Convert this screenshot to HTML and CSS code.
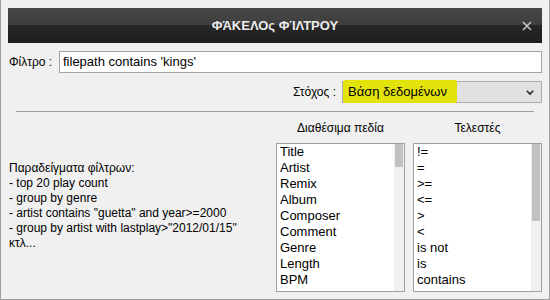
FILE: index.html
```html
<!DOCTYPE html>
<html lang="el">
<head>
    <meta charset="UTF-8">
    <meta name="viewport" content="width=device-width, initial-scale=1.0">
    <title>Φάκελος φίλτρου</title>
    <link rel="stylesheet" href="styles.css">
</head>
<body>
    <div class="window">
        <div class="titlebar">
            <span></span>
            <span class="title">ΦΆΚΕΛΟς ΦΊΛΤΡΟΥ</span>
            <svg class="close" width="10" height="10" viewBox="0 0 10 10">
                <path d="M1 1 L9 9 M9 1 L1 9" stroke="#c4c4c4" stroke-width="1.6" fill="none"/>
            </svg>
        </div>

        <!-- Filter expression -->
        <div class="filter-row">
            <span class="field-label">Φίλτρο :</span>
            <div class="text-input">filepath contains 'kings'</div>
        </div>

        <div class="target-row">
            <span class="field-label">Στόχος :</span>
            <div class="select">
                <span class="select-value">Βάση δεδομένων</span>
                <svg class="chevron" width="8" height="5" viewBox="0 0 8 5">
                    <path d="M0.8 0.8 L4 4 L7.2 0.8" stroke="#222" stroke-width="1.6" fill="none"/>
                </svg>
            </div>
        </div>

        <div class="divider"></div>

        <div class="lower">
            <div class="examples">
                Παραδείγματα φίλτρων:<br>
                - top 20 play count<br>
                - group by genre<br>
                - artist contains "guetta" and year&gt;=2000<br>
                - group by artist with lastplay&gt;"2012/01/15"<br>
                κτλ...
            </div>

            <div class="column">
                <div class="col-title">Διαθέσιμα πεδία</div>
                <div class="listbox">
                    <div class="items">
                        <div>Title</div>
                        <div>Artist</div>
                        <div>Remix</div>
                        <div>Album</div>
                        <div>Composer</div>
                        <div>Comment</div>
                        <div>Genre</div>
                        <div>Length</div>
                        <div>BPM</div>
                        <div>Year</div>
                    </div>
                    <div class="scrollbar"><div class="thumb thumb-short"></div></div>
                </div>
            </div>

            <div class="column">
                <div class="col-title">Τελεστές</div>
                <div class="listbox">
                    <div class="items">
                        <div>!=</div>
                        <div>=</div>
                        <div>&gt;=</div>
                        <div>&lt;=</div>
                        <div>&gt;</div>
                        <div>&lt;</div>
                        <div>is not</div>
                        <div>is</div>
                        <div>contains</div>
                        <div>does not contain</div>
                    </div>
                    <div class="scrollbar"><div class="thumb thumb-long"></div></div>
                </div>
            </div>
        </div>
    </div>
</body>
</html>
```

FILE: styles.css
```css
/* General */
body {
    margin: 0;
    font-family: 'Liberation Sans', Arial, sans-serif;
    font-size: 12px;
    color: #000;
    background-color: #f0f0f0;
}

.window {
    box-sizing: border-box;
    width: 550px;
    height: 300px;
    padding: 8px 7px 0 7px;
    border: 1px solid #a0a0a0;
    border-top: none;
    background-color: #f0f0f0;
    overflow: hidden;
}

/* Title bar */
.titlebar {
    display: grid;
    grid-template-columns: 1fr auto 1fr;
    align-items: center;
    height: 35px;
    background: linear-gradient(to bottom, #484848 0, #3d3d3d 17px, #262626 17px, #1e1e1e 100%);
}

.title {
    color: #ececec;
    font-size: 13px;
    font-weight: bold;
}

.close {
    justify-self: end;
    margin-right: 10px;
}

/* Filter and target rows */
.filter-row {
    display: flex;
    align-items: center;
    margin-top: 8px;
}

.filter-row .field-label {
    width: 50px;
    padding-left: 1px;
}

.text-input {
    flex: 1;
    box-sizing: border-box;
    height: 22px;
    line-height: 20px;
    padding-left: 3px;
    border: 1px solid #a5a5a5;
    background-color: #fff;
    font-size: 13px;
}

.target-row {
    display: flex;
    justify-content: flex-end;
    align-items: center;
    gap: 6px;
    margin-top: 8px;
}

.select {
    display: flex;
    align-items: center;
    justify-content: space-between;
    box-sizing: border-box;
    width: 200px;
    height: 22px;
    border: 1px solid #adadad;
    background-color: #e1e1e1;
    font-size: 13px;
}

.select-value {
    align-self: stretch;
    margin: -2px 0 -1px 0;
    padding: 0 10px 0 5px;
    line-height: 23px;
    background-color: #e3e30c;
    border-radius: 3px;
}

.chevron {
    margin-right: 7px;
}

.divider {
    height: 1px;
    margin: 8px 8px 0 8px;
    background-color: #a0a0a0;
}

/* Lower section */
.lower {
    display: grid;
    grid-template-columns: 1fr 129px 129px;
    column-gap: 8px;
    margin-top: 8px;
}

.examples {
    padding-top: 41px;
    padding-left: 1px;
    line-height: 15px;
}

.col-title {
    height: 16px;
    line-height: 16px;
    margin-bottom: 7px;
    text-align: center;
}

.listbox {
    display: flex;
    box-sizing: border-box;
    height: 149px;
    border: 1px solid #a0a0a0;
    background-color: #fff;
    overflow: hidden;
}

.items {
    flex: 1;
    padding-left: 3px;
    font-size: 13px;
    line-height: 16px;
    white-space: nowrap;
    overflow: hidden;
}

.scrollbar {
    width: 10px;
    background-color: #f0f0f0;
}

.thumb {
    width: 8px;
    margin-left: 1px;
    background-color: #c1c1c1;
}

.thumb-short {
    height: 23px;
}

.thumb-long {
    height: 77px;
}
```
